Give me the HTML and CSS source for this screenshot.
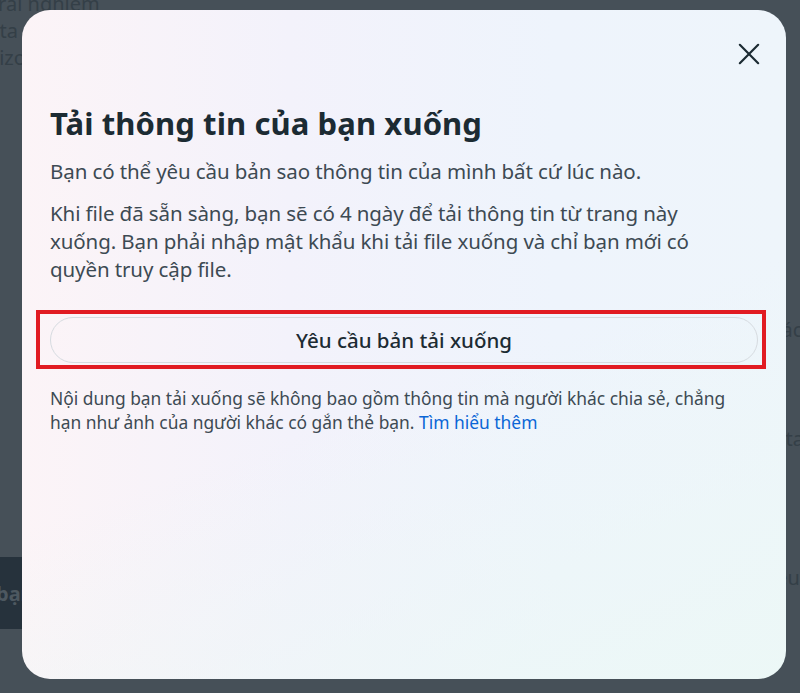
FILE: index.html
```html
<!DOCTYPE html>
<html lang="vi">
<head>
<meta charset="utf-8">
<link rel="stylesheet" href="styles.css">
</head>
<body>
<div class="page">
  <div class="bg-left">
    <div class="bg-line l1">Trải nghiệm</div>
    <div class="bg-line l2">Meta</div>
    <div class="bg-line l3">Horizon</div>
    <div class="bg-bar"><span>bạn</span></div>
  </div>
  <div class="bg-right">
    <div class="bg-r r1">các</div>
    <div class="bg-r r2">Meta</div>
    <div class="bg-r r3">Yêu</div>
  </div>
</div>
<div class="overlay">
  <div class="modal">
    <div class="modal-top">
      <button class="close" aria-label="Đóng">
        <svg width="24" height="24" viewBox="0 0 24 24"><path d="M2 2 L22 22 M22 2 L2 22" stroke="#1c2b33" stroke-width="2.4" stroke-linecap="round" fill="none"/></svg>
      </button>
    </div>
    <h1 class="title">Tải thông tin của bạn xuống</h1>
    <p class="text">Bạn có thể yêu cầu bản sao thông tin của mình bất cứ lúc nào.</p>
    <p class="text">Khi file đã sẵn sàng, bạn sẽ có 4 ngày để tải thông tin từ trang này xuống. Bạn phải nhập mật khẩu khi tải file xuống và chỉ bạn mới có quyền truy cập file.</p>
    <div class="highlight">
      <button class="request">Yêu cầu bản tải xuống</button>
    </div>
    <p class="note">Nội dung bạn tải xuống sẽ không bao gồm thông tin mà người khác chia sẻ, chẳng hạn như ảnh của người khác có gắn thẻ bạn. <a href="#" class="link">Tìm hiểu thêm</a></p>
  </div>
</div>
</body>
</html>
```
FILE: styles.css
```css
* { box-sizing: border-box; }
html, body { margin: 0; padding: 0; }
body {
  width: 800px;
  height: 693px;
  overflow: hidden;
  background: #465058;
  font-family: "Noto Sans", "Open Sans", sans-serif;
  position: relative;
}
.page {
  display: flex;
  justify-content: space-between;
  height: 693px;
}
.bg-left {
  width: 140px;
  color: #343f47;
  font-size: 20px;
  line-height: 27px;
}
.bg-line { white-space: nowrap; }
.bg-line.l1 { margin-top: -10px; margin-left: -12px; }
.bg-line.l2 { margin-left: -30px; }
.bg-line.l3 { margin-left: -36px; }
.bg-bar {
  margin-top: 486px;
  height: 72px;
  width: 300px;
  background: #26323c;
  display: flex;
  align-items: center;
  color: #4d5860;
  font-weight: 700;
  font-size: 20px;
}
.bg-bar span { margin-left: -4px; }
.bg-right {
  width: 40px;
  margin-right: -20px;
  color: #343f47;
  font-size: 20px;
}
.bg-r { white-space: nowrap; }
.bg-r.r1 { margin-top: 316px; margin-left: -8px; }
.bg-r.r2 { margin-top: 82px; margin-left: -24px; }
.bg-r.r3 { margin-top: 112px; margin-left: -14px; }
.overlay {
  position: absolute;
  inset: 0;
  padding: 10px 14px 14px 22px;
}
.modal {
  width: 764px;
  height: 669px;
  border-radius: 28px;
  background:
    linear-gradient(160deg, rgba(255,255,255,0) 55%, rgba(236,248,246,0.9) 100%),
    linear-gradient(90deg, #fcf4f7 0%, #f3f2fb 35%, #eef4fc 70%, #eef5fb 100%);
  padding: 30px 28px 0 28px;
  color: #1c2b33;
}
.modal-top {
  display: flex;
  justify-content: flex-end;
  height: 30px;
}
.close {
  width: 28px;
  height: 28px;
  border: none;
  background: none;
  padding: 2px;
  cursor: pointer;
  display: flex;
  align-items: center;
  justify-content: center;
  transform: translate(5px, 0px);
}
.close svg { width: 22px; height: 22px; }
.title {
  margin: 33px 0 0 0;
  font-size: 31px;
  line-height: 40px;
  font-weight: 700;
  color: #1c2b33;
  letter-spacing: 0.1px;
}
.text {
  margin: 14px 0 0 0;
  font-size: 20.5px;
  line-height: 28px;
  color: #3d4a53;
  letter-spacing: -0.1px;
  max-width: 660px;
}
.text + .text { margin-top: 14px; }
.highlight {
  margin: 27px -14px 0 -14px;
  width: 730px;
  border: 4px solid #e11b22;
  padding: 3px 4px 2px 10px;
}
.request {
  display: block;
  width: 100%;
  height: 46px;
  border: 1px solid #d6dbe0;
  border-radius: 24px;
  background: transparent;
  font-family: inherit;
  font-size: 20.5px;
  font-weight: 500;
  color: #1c2b33;
  padding: 0;
}
.note {
  margin: 17px 0 0 0;
  font-size: 17.4px;
  line-height: 24px;
  color: #3d4a53;
}
.link { color: #0a66d6; text-decoration: none; }
```
